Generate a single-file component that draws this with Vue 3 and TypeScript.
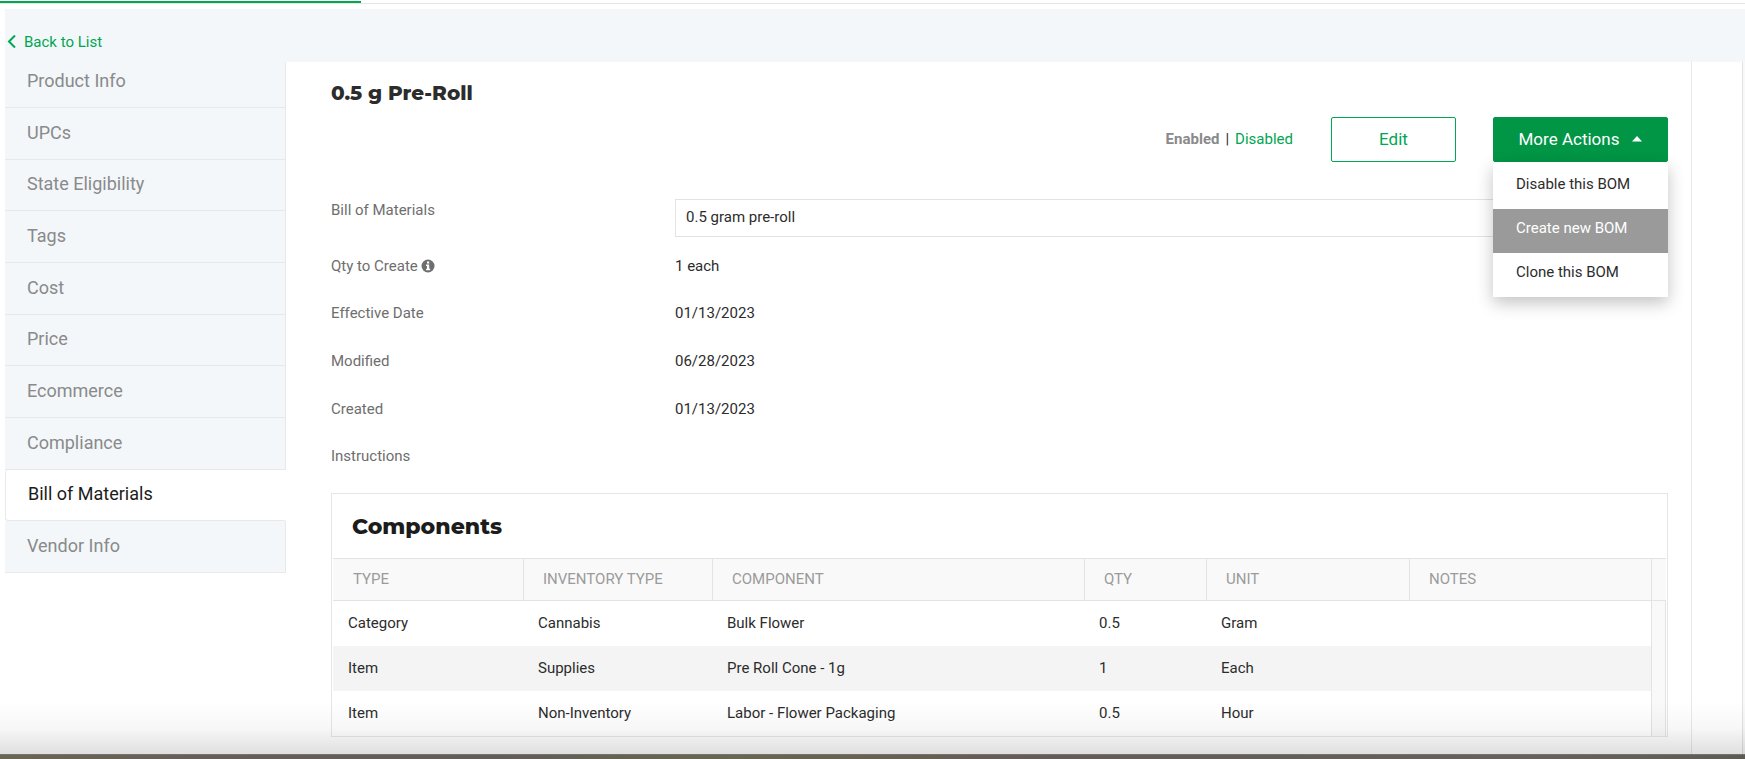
<script setup lang="ts">
import { ref } from 'vue'

interface Component {
  type: string
  inventoryType: string
  component: string
  qty: string
  unit: string
  notes: string
}

const sections: string[] = [
  'Product Info',
  'UPCs',
  'State Eligibility',
  'Tags',
  'Cost',
  'Price',
  'Ecommerce',
  'Compliance',
  'Bill of Materials',
  'Vendor Info',
]
const activeSection = ref('Bill of Materials')

const actions: string[] = ['Disable this BOM', 'Create new BOM', 'Clone this BOM']
const highlighted = ref('Create new BOM')
const menuOpen = ref(true)

const bom = ref('0.5 gram pre-roll')

const details: { label: string; value: string; info?: boolean }[] = [
  { label: 'Qty to Create', value: '1 each', info: true },
  { label: 'Effective Date', value: '01/13/2023' },
  { label: 'Modified', value: '06/28/2023' },
  { label: 'Created', value: '01/13/2023' },
  { label: 'Instructions', value: '' },
]

const columns: string[] = ['Type', 'Inventory Type', 'Component', 'Qty', 'Unit', 'Notes']
const rows: Component[] = [
  { type: 'Category', inventoryType: 'Cannabis', component: 'Bulk Flower', qty: '0.5', unit: 'Gram', notes: '' },
  { type: 'Item', inventoryType: 'Supplies', component: 'Pre Roll Cone - 1g', qty: '1', unit: 'Each', notes: '' },
  { type: 'Item', inventoryType: 'Non-Inventory', component: 'Labor - Flower Packaging', qty: '0.5', unit: 'Hour', notes: '' },
]
</script>

<template>
  <div class="page">
    <div class="tabline"><span class="tabline-active"></span></div>

    <header class="topbar">
      <a href="#" class="back">
        <svg width="9" height="14" viewBox="0 0 9 14" aria-hidden="true">
          <path d="M8 0.5 L2 6.5 L8 12.5" fill="none" stroke="currentColor" stroke-width="2" />
        </svg>
        Back to List
      </a>
    </header>

    <div class="layout">
      <nav class="sidebar">
        <a
          v-for="s in sections"
          :key="s"
          href="#"
          :class="['side-item', { active: s === activeSection }]"
          @click.prevent="activeSection = s"
        >{{ s }}</a>
      </nav>

      <main class="content">
        <h1 class="title">0.5 g Pre-Roll</h1>

        <div class="actions">
          <div class="status">
            <b class="enabled">Enabled</b><span class="bar">|</span><a href="#" class="disabled">Disabled</a>
          </div>
          <button type="button" class="btn edit">Edit</button>
          <div class="more">
            <button type="button" class="btn more-btn" :aria-expanded="menuOpen" @click="menuOpen = !menuOpen">
              More Actions
              <svg width="10" height="6" viewBox="0 0 10 6" aria-hidden="true"><path d="M5 0 L10 5.5 H0 Z" fill="currentColor" /></svg>
            </button>
            <div v-if="menuOpen" class="menu">
              <button
                v-for="a in actions"
                :key="a"
                type="button"
                :class="['menu-item', { on: a === highlighted }]"
                @mouseenter="highlighted = a"
              >{{ a }}</button>
            </div>
          </div>
        </div>

        <div class="field">
          <label class="label" for="bom">Bill of Materials</label>
          <select id="bom" v-model="bom" class="select">
            <option>0.5 gram pre-roll</option>
          </select>
        </div>

        <dl class="details">
          <div v-for="d in details" :key="d.label" class="detail">
            <dt class="label">
              {{ d.label }}
              <svg v-if="d.info" class="info" width="14" height="14" viewBox="0 0 14 14" aria-hidden="true">
                <circle cx="7" cy="7" r="6.5" fill="currentColor" />
                <path d="M6 2.4 H8.2 V4.5 H6 Z M5 5.6 H8.2 V9.7 H9.2 V11.2 H5 V9.7 H6 V7.1 H5 Z" fill="#fff" />
              </svg>
            </dt>
            <dd class="value">{{ d.value }}</dd>
          </div>
        </dl>

        <section class="card">
          <h2 class="card-title">Components</h2>
          <table class="grid">
            <colgroup>
              <col class="c-type" />
              <col class="c-inv" />
              <col class="c-comp" />
              <col class="c-qty" />
              <col class="c-unit" />
              <col />
              <col class="c-gutter" />
            </colgroup>
            <thead>
              <tr>
                <th v-for="c in columns" :key="c" scope="col">{{ c }}</th>
                <td class="head-gutter"></td>
              </tr>
            </thead>
            <tbody>
              <tr v-for="(r, i) in rows" :key="i">
                <td>{{ r.type }}</td>
                <td>{{ r.inventoryType }}</td>
                <td>{{ r.component }}</td>
                <td>{{ r.qty }}</td>
                <td>{{ r.unit }}</td>
                <td>{{ r.notes }}</td>
                <td v-if="i === 0" class="gutter" :rowspan="rows.length"></td>
              </tr>
            </tbody>
          </table>
        </section>
      </main>
      <div class="rail"></div>
    </div>

    <div class="ground"></div>
  </div>
</template>

<style>
body {
  margin: 0;
  background: #fff;
}
</style>

<style scoped>
* {
  box-sizing: border-box;
}
.page {
  position: relative;
  display: flex;
  flex-direction: column;
  min-height: 100vh;
  font-family: Roboto, "Liberation Sans", sans-serif;
  font-size: 15px;
  line-height: 22px;
  color: #2c2c2c;
}
a {
  color: #00a651;
  text-decoration: none;
}
button,
select {
  font-family: inherit;
  cursor: pointer;
}
.tabline {
  height: 4px;
  margin-bottom: 5px;
  padding-top: 1px;
  border-bottom: 1px solid #e5e5e5;
}
.tabline-active {
  display: block;
  width: 361px;
  height: 2px;
  background: #00a94f;
}
.topbar {
  height: 53px;
  margin-left: 5px;
  padding: 22px 0 0 2px;
  background: #f3f7fa;
}
.back {
  display: inline-flex;
  align-items: center;
  gap: 8px;
}
.layout {
  display: flex;
  flex: 1;
  padding-left: 5px;
}
.sidebar {
  display: grid;
  grid-template-rows: 46px;
  grid-auto-rows: 1fr;
  align-self: flex-start;
  width: 281px;
  height: 511px;
}
.side-item {
  display: flex;
  align-items: center;
  padding: 0 0 1px 22px;
  background: #f3f7fa;
  border-right: 1px solid #e7e9eb;
  border-bottom: 1px solid #e7e9eb;
  font-size: 18px;
  color: #8a8a8a;
}
.side-item:first-child {
  padding-bottom: 8px;
}
.side-item.active {
  background: #fff;
  border-left: 1px solid #e7e9eb;
  border-right-color: #fff;
  border-radius: 3px 0 0 3px;
  color: #1c1c1c;
}
.content {
  flex: 1;
  min-width: 0;
  padding: 20px 23px 17px 45px;
  border-right: 1px solid #e8e8e8;
}
.rail {
  width: 53px;
  border-right: 2px solid #f9f9f9;
  box-shadow: inset -1px 0 #e2e2e2;
}
.title,
.card-title {
  margin: 0;
  font-family: Montserrat, Inter, sans-serif;
  font-weight: 800;
}
.title {
  font-size: 20px;
}
.actions {
  display: flex;
  justify-content: flex-end;
  align-items: center;
  margin-top: 13px;
}
.status {
  margin-right: 38px;
  padding-bottom: 2px;
}
.enabled {
  color: #8a8a8a;
}
.bar {
  margin: 0 6px;
}
.btn {
  height: 45px;
  padding: 0 0 2px;
  border: 1px solid #00a651;
  border-radius: 2px;
  font-size: 17px;
}
.edit {
  width: 125px;
  margin-right: 37px;
  background: #fff;
  color: #00a651;
}
.more {
  position: relative;
}
.more-btn {
  display: flex;
  align-items: center;
  justify-content: center;
  gap: 13px;
  width: 175px;
  background: #009645;
  border-color: #009645;
  color: #fff;
}
.menu {
  position: absolute;
  top: 45px;
  right: 0;
  width: 100%;
  padding-top: 3px;
  background: #fff;
  box-shadow: 0 6px 16px rgba(0, 0, 0, 0.24);
}
.menu-item {
  display: block;
  width: 100%;
  height: 44px;
  padding: 0 0 6px 23px;
  border: 0;
  background: #fff;
  color: #2c2c2c;
  font-size: 15px;
  text-align: left;
}
.menu-item.on {
  background: #9a9a9a;
  color: #fff;
}
.field,
.detail {
  display: grid;
  grid-template-columns: 344px 1fr;
}
.field {
  margin: 37px 0 5px;
}
.label {
  color: #6e6e6e;
}
.select {
  height: 38px;
  padding: 0 10px 2px;
  border: 1px solid #e3e3e3;
  border-radius: 0;
  background: #fff;
  color: #2c2c2c;
  font-size: 15px;
  appearance: none;
}
.details {
  display: grid;
  grid-auto-rows: 1fr;
  height: 238px;
  margin: 0;
}
.detail {
  align-items: center;
}
.value {
  margin: 0;
}
.info {
  vertical-align: -2px;
}
.card {
  margin-top: 13px;
  padding: 0 1px;
  border: 1px solid #e6e6e6;
}
.card-title {
  padding: 22px 0 20px 19px;
  font-size: 22px;
  color: #1c1c1c;
}
.grid {
  width: 100%;
  table-layout: fixed;
  border-collapse: separate;
  border-spacing: 0;
}
.c-type {
  width: 190px;
}
.c-inv {
  width: 189px;
}
.c-comp {
  width: 372px;
}
.c-qty {
  width: 122px;
}
.c-unit {
  width: 203px;
}
.c-gutter {
  width: 15px;
}
th,
td {
  padding: 0 0 2px 15px;
  text-align: left;
}
thead th,
.head-gutter {
  height: 43px;
  padding-left: 19px;
  background: #f9f9f9;
  border: solid #e3e3e3;
  border-width: 1px 0 1px 1px;
  color: #9b9b9b;
  font-weight: 400;
  text-transform: uppercase;
}
thead th:first-child {
  padding-left: 20px;
  border-left: 0;
}
tbody td {
  height: 45px;
}
tbody tr:nth-child(even) td {
  background: #f4f4f4;
}
.head-gutter,
.gutter {
  padding: 0;
}
.gutter {
  background: #f9f9f9;
  border: solid #e3e3e3;
  border-width: 0 1px;
}
.ground {
  position: relative;
  height: 6px;
  border-top: 1px solid #85837f;
  background: linear-gradient(90deg, #6b6553, #675d58 12%, #625c57 28%, #69664f 42%, #665b56 58%, #635d58 72%, #68605a 88%, #5e5c52);
}
.ground::before {
  content: "";
  position: absolute;
  right: 0;
  bottom: 100%;
  left: 0;
  height: 54px;
  background: linear-gradient(rgba(0, 0, 0, 0), rgba(0, 0, 0, 0.03) 50%, rgba(0, 0, 0, 0.13));
  pointer-events: none;
}
</style>
